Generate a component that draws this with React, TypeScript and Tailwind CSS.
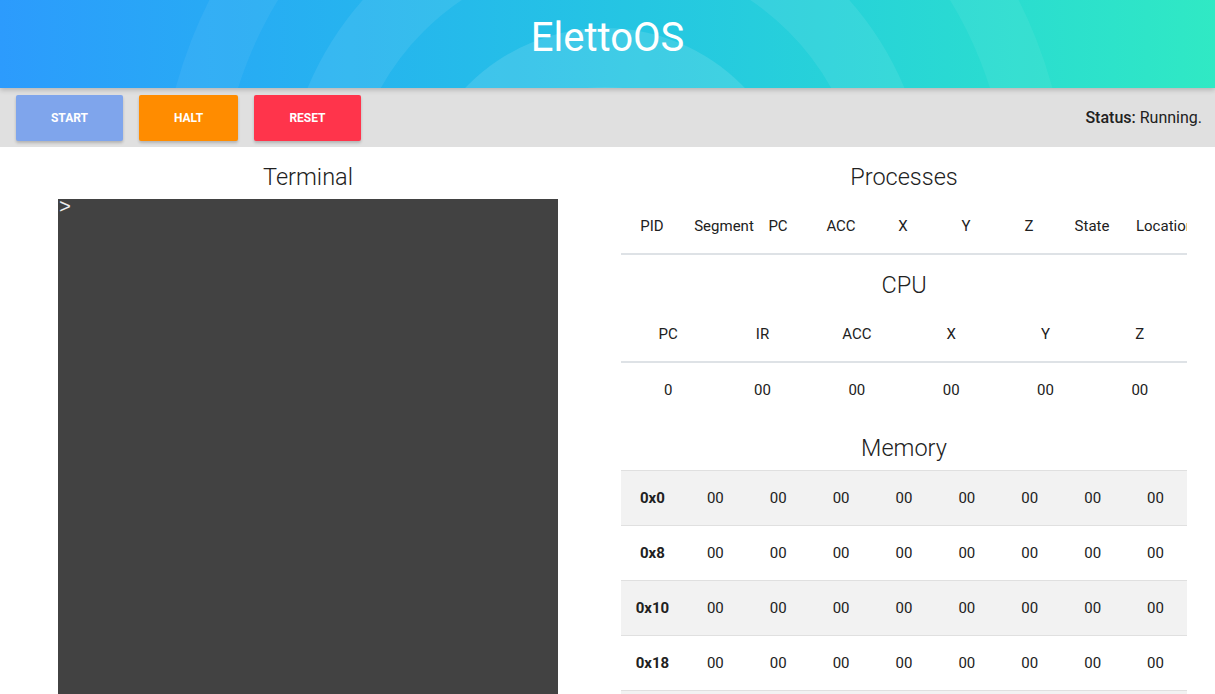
import React from 'react';

const procCols = [
  { label: 'PID', cls: 'ml-[6px]' },
  { label: 'Segment', cls: 'ml-[22px]' },
  { label: 'PC', cls: 'ml-[4px]' },
  { label: 'ACC', cls: 'ml-[13px]' },
  { label: 'X', cls: 'ml-[12px]' },
  { label: 'Y', cls: 'ml-[13px]' },
  { label: 'Z', cls: 'ml-[13px]' },
  { label: 'State', cls: 'ml-[13px]' },
  { label: 'Location', cls: 'ml-[23px]' },
];

const cpuCols = ['PC', 'IR', 'ACC', 'X', 'Y', 'Z'];
const cpuVals = ['0', '00', '00', '00', '00', '00'];

const memRows = ['0x0', '0x8', '0x10', '0x18', '0x20', '0x28'];

const SectionTitle: React.FC<{ children: React.ReactNode }> = ({ children }) => (
  <h2 className="mt-[14px] h-[32px] text-center text-[23.5px] leading-[32px] font-light text-[#212121]">
    {children}
  </h2>
);

// soft ripple rings behind the title
const HeaderArt: React.FC = () => (
  <svg className="absolute inset-0" width="1215" height="88" viewBox="0 0 1215 88">
    <circle cx="614" cy="206" r="424" fill="none" stroke="white" strokeOpacity="0.06" strokeWidth="60" />
    <circle cx="606" cy="214" r="291" fill="none" stroke="white" strokeOpacity="0.08" strokeWidth="66" />
    <circle cx="605" cy="221" r="193" fill="white" fillOpacity="0.12" />
    <circle cx="605" cy="260" r="173" fill="white" fillOpacity="0.08" />
  </svg>
);

const App: React.FC = () => {
  return (
    <div className="min-h-screen bg-white font-['Roboto',sans-serif] text-[15px] text-[#212121]">
      <header className="relative z-10 h-[88px] overflow-hidden bg-linear-to-r from-[#2c9bfd] to-[#30e9c4] shadow-[0_2px_5px_rgba(0,0,0,0.2)]">
        <HeaderArt />
        <div className="relative flex justify-center pt-[18px]">
          <h1 className="text-[40px] leading-[40px] font-normal text-white">ElettoOS</h1>
        </div>
      </header>

      <div className="flex h-[59px] items-center justify-between bg-[#e0e0e0] pl-[16px] pr-[13px]">
        <div className="flex gap-4 pt-[1px]">
          <button type="button" className="h-[46px] w-[107px] rounded-[2px] bg-[#7fa5ec] text-[12px] font-bold uppercase text-white shadow-[0_2px_3px_rgba(0,0,0,0.2)]">
            Start
          </button>
          <button type="button" className="h-[46px] w-[99px] rounded-[2px] bg-[#ff8c00] text-[12px] font-bold uppercase text-white shadow-[0_2px_3px_rgba(0,0,0,0.2)]">
            Halt
          </button>
          <button type="button" className="h-[46px] w-[107px] rounded-[2px] bg-[#ff344b] text-[12px] font-bold uppercase text-white shadow-[0_2px_3px_rgba(0,0,0,0.2)]">
            Reset
          </button>
        </div>
        <div className="text-[16px] text-[#212121]">
          <span className="font-medium">Status:</span> Running.
        </div>
      </div>

      <div className="flex">
        {/* terminal */}
        <div className="w-[616px] shrink-0">
          <SectionTitle>Terminal</SectionTitle>
          <div className="mx-auto mt-[6px] h-[500px] w-[500px] bg-[#424242] px-[1px] font-['Liberation_Mono',monospace] text-[20px] leading-[18px] text-[#eeeeee]">
            &gt;
          </div>
        </div>

        <div className="ml-[5px] w-[566px] shrink-0 overflow-hidden">
          <SectionTitle>Processes</SectionTitle>
          <div className="mt-[6px] flex h-[56px] items-center overflow-hidden border-b-2 border-[#dee2e6]">
            {procCols.map((c) => (
              <div key={c.label} className={`flex w-[50px] shrink-0 justify-center whitespace-nowrap ${c.cls}`}>
                {c.label}
              </div>
            ))}
          </div>

          <SectionTitle>CPU</SectionTitle>
          <div className="mt-[6px] grid h-[56px] grid-cols-6 items-center border-b-2 border-[#dee2e6] text-center">
            {cpuCols.map((c) => (
              <div key={c}>{c}</div>
            ))}
          </div>
          <div className="grid h-[55px] grid-cols-6 items-center text-center">
            {cpuVals.map((v, i) => (
              <div key={i}>{v}</div>
            ))}
          </div>

          <SectionTitle>Memory</SectionTitle>
          <div className="mt-[6px] border-t border-[#e0e0e0]">
            {memRows.map((addr, r) => (
              <div
                key={addr}
                className={`grid h-[55px] grid-cols-9 items-center border-b border-[#e0e0e0] text-center ${r % 2 === 0 ? 'bg-[#f2f2f2]' : 'bg-white'}`}
              >
                <div className="font-bold">{addr}</div>
                {Array.from({ length: 8 }).map((_, i) => (
                  <div key={i}>00</div>
                ))}
              </div>
            ))}
          </div>
        </div>
      </div>
    </div>
  );
};

export default App;
